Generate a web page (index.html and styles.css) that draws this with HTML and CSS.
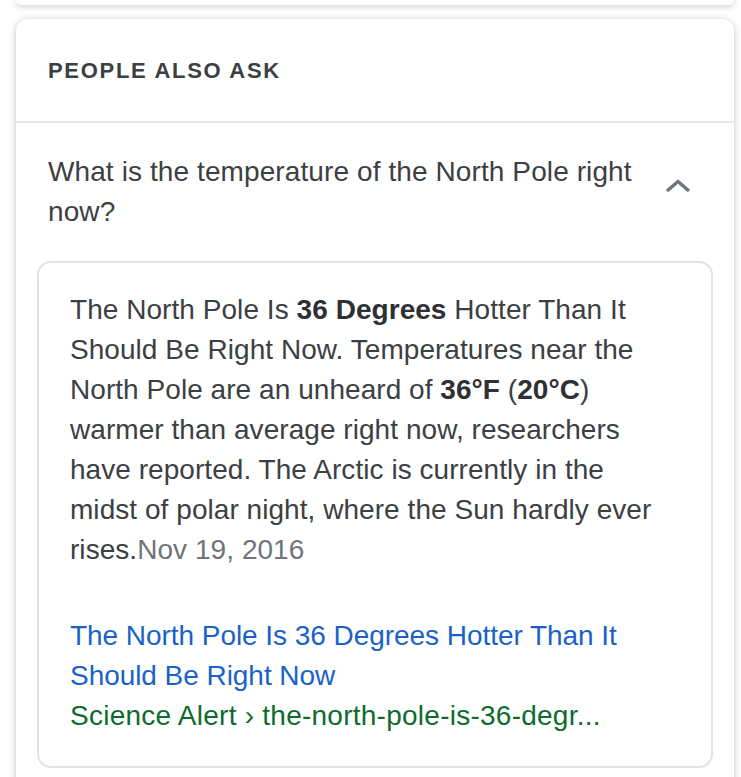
FILE: index.html
```html
<!DOCTYPE html>
<html>
<head>
<meta charset="utf-8">
<link rel="stylesheet" href="styles.css">
</head>
<body>
<div class="prev-card"></div>
<div class="card">
  <div class="header">PEOPLE ALSO ASK</div>
  <div class="question">
    <div class="q-text">What is the temperature of the North Pole right now?</div>
    <svg class="chev" width="26" height="16" viewBox="0 0 26 16"><path d="M2 13 L13 3.5 L24 13" fill="none" stroke="#70757a" stroke-width="3.4"/></svg>
  </div>
  <div class="answer">
    <div class="snippet">The North Pole Is <b>36 Degrees</b> Hotter Than It Should Be Right Now. Temperatures near the North Pole are an unheard of <b>36°F</b> (<b>20°C</b>) warmer than average right now, researchers have reported. The Arctic is currently in the midst of polar night, where the Sun hardly ever rises.<span class="date">Nov 19, 2016</span></div>
    <div class="link">The North Pole Is 36 Degrees Hotter Than It Should Be Right Now</div>
    <div class="cite">Science Alert › the-north-pole-is-36-degr...</div>
  </div>
</div>
</body>
</html>
```
FILE: styles.css
```css
html, body {
  margin: 0;
  padding: 0;
  background: #fff;
}
body {
  font-family: "Liberation Sans", sans-serif;
  color: #3c4043;
  overflow: hidden;
}
.prev-card {
  height: 5px;
  margin: 0 7px 0 16px;
  border-radius: 0 0 12px 12px;
  box-shadow: 0 1px 6px rgba(32, 33, 36, 0.28);
  background: #fff;
}
.card {
  margin: 14px 7px 0 16px;
  border-radius: 12px 12px 0 0;
  box-shadow: 0 1px 6px rgba(32, 33, 36, 0.28);
  background: #fff;
  height: 800px;
}
.header {
  height: 104px;
  box-sizing: border-box;
  padding-left: 32px;
  padding-top: 2px;
  display: flex;
  align-items: center;
  font-size: 22px;
  font-weight: bold;
  letter-spacing: 1.7px;
  color: #3c4043;
  border-bottom: 2px solid #e6e6e6;
}
.question {
  display: flex;
  align-items: center;
  padding: 29px 0 0 32px;
}
.q-text {
  width: 600px;
  font-size: 28px;
  line-height: 40px;
  letter-spacing: 0.1px;
  color: #3c4043;
}
.chev {
  margin-left: 17px;
  margin-bottom: 12px;
}
.answer {
  margin: 29px 21px 0 21px;
  border: 2px solid #e3e3e3;
  border-radius: 14px;
  padding: 27px 10px 30px 31px;
}
.snippet {
  width: 595px;
  font-size: 28px;
  line-height: 40px;
  letter-spacing: 0.05px;
  color: #3c4043;
}
.snippet b {
  color: #2e3033;
}
.date {
  color: #70757a;
}
.link {
  width: 595px;
  margin-top: 46px;
  font-size: 28px;
  line-height: 40px;
  letter-spacing: -0.05px;
  color: #1a62c9;
}
.cite {
  font-size: 28px;
  line-height: 40px;
  letter-spacing: 0.25px;
  color: #0d6b2d;
}
```
